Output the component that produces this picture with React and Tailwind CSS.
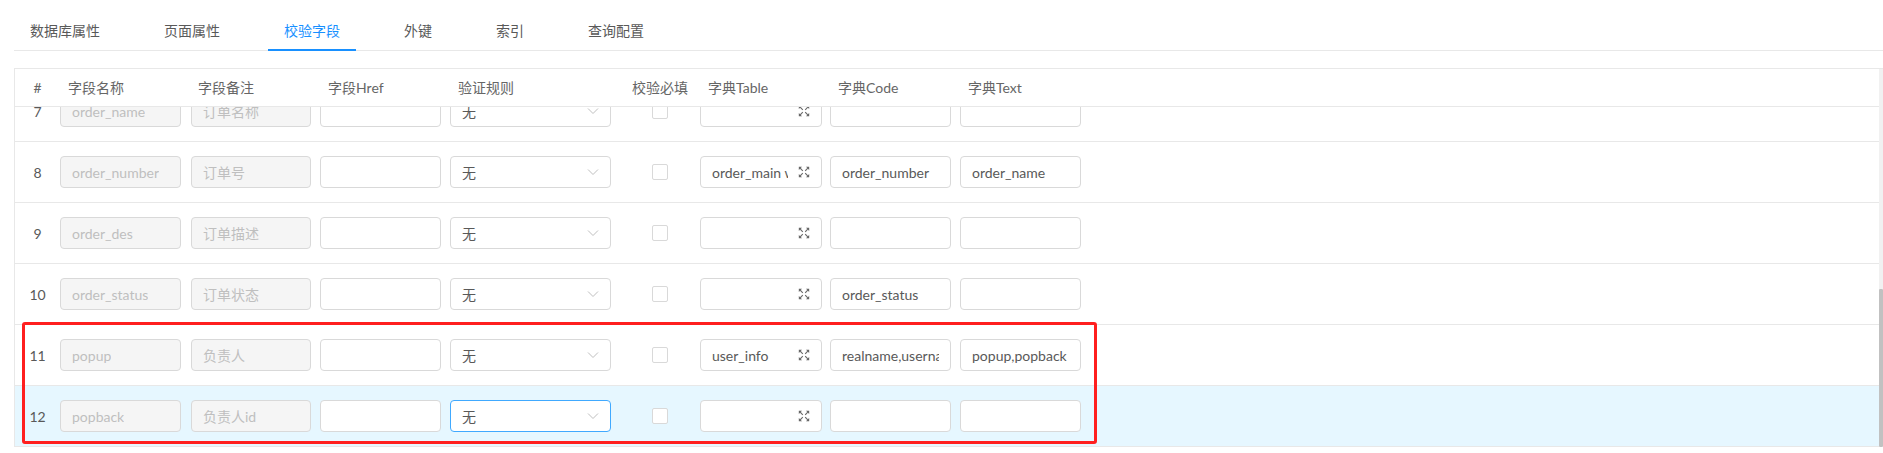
import React from "react";

const FONT = { fontFamily: 'Lato, "Noto Sans CJK SC", sans-serif' };

const tabs = ["数据库属性", "页面属性", "校验字段", "外键", "索引", "查询配置"];

const rows = [
  { n: 7, name: "order_name", remark: "订单名称", table: "", code: "", text: "" },
  { n: 8, name: "order_number", remark: "订单号", table: "order_main with_detail", code: "order_number", text: "order_name" },
  { n: 9, name: "order_des", remark: "订单描述", table: "", code: "", text: "" },
  { n: 10, name: "order_status", remark: "订单状态", table: "", code: "order_status", text: "" },
  { n: 11, name: "popup", remark: "负责人", table: "user_info", code: "realname,username", text: "popup,popback" },
  { n: 12, name: "popback", remark: "负责人id", table: "", code: "", text: "", active: true },
];

function Chevron() {
  return (
    <svg width="12" height="12" viewBox="0 0 12 12" fill="none" className="shrink-0">
      <path d="M1 3.5 L6 8.5 L11 3.5" stroke="#bfbfbf" strokeWidth="1" />
    </svg>
  );
}

function ExpandIcon() {
  return (
    <svg width="12" height="12" viewBox="0 0 12 12" fill="none" className="shrink-0 ml-[10px]">
      <g stroke="#666" strokeWidth="1.1">
        <path d="M2.2 2.2 L4.8 4.8" />
        <path d="M9.8 2.2 L7.2 4.8" />
        <path d="M2.2 9.8 L4.8 7.2" />
        <path d="M9.8 9.8 L7.2 7.2" />
      </g>
      <g fill="#666">
        <path d="M0.8 0.8 L4 0.8 L0.8 4 Z" />
        <path d="M11.2 0.8 L8 0.8 L11.2 4 Z" />
        <path d="M0.8 11.2 L4 11.2 L0.8 8 Z" />
        <path d="M11.2 11.2 L8 11.2 L11.2 8 Z" />
      </g>
    </svg>
  );
}

function DisabledInput({ value, w }) {
  return (
    <div className={`${w} h-[32px] rounded-[4px] border border-[#d9d9d9] bg-[#f5f5f5] px-[11px] flex items-center text-[14px] text-[#bfbfbf]`}>
      <span className="overflow-hidden whitespace-nowrap">{value}</span>
    </div>
  );
}

function TextInput({ value, w }) {
  return (
    <div className={`${w} h-[32px] rounded-[4px] border border-[#d9d9d9] bg-white px-[11px] flex items-center text-[14px] text-[#595959]`}>
      <span className="overflow-hidden whitespace-nowrap flex-1">{value}</span>
    </div>
  );
}

function SelectBox({ active }) {
  return (
    <div
      className={`w-[161px] h-[32px] rounded-[4px] border bg-white pl-[11px] pr-[11px] flex items-center justify-between text-[14px] text-[#595959] ${
        active ? "border-[#40a9ff]" : "border-[#d9d9d9]"
      }`}
    >
      <span>无</span>
      <Chevron />
    </div>
  );
}

function PopupInput({ value }) {
  return (
    <div className="w-[122px] h-[32px] rounded-[4px] border border-[#d9d9d9] bg-white px-[11px] flex items-center text-[14px] text-[#595959]">
      <span className="overflow-hidden whitespace-nowrap flex-1">{value}</span>
      <ExpandIcon />
    </div>
  );
}

function Checkbox() {
  return <div className="w-[16px] h-[16px] rounded-[2px] border border-[#d9d9d9] bg-white" />;
}

export default function App() {
  return (
    <div className="relative w-[1883px] h-[453px] bg-white overflow-hidden" style={FONT}>
      {/* Tabs */}
      <div className="ml-[14px] h-[51px] border-b border-[#e8e8e8] flex items-end">
        {tabs.map((t) => {
          const active = t === "校验字段";
          return (
            <div
              key={t}
              className={`relative px-4 mr-8 pb-[9px] text-[14px] leading-[21px] ${
                active ? "text-[#1890ff]" : "text-[#595959]"
              }`}
            >
              {t}
              {active && <div className="absolute left-0 right-0 -bottom-px h-[2px] bg-[#1890ff]" />}
            </div>
          );
        })}
      </div>

      {/* Table */}
      <div className="mt-[17px] ml-[14px] border-t border-l border-[#e8e8e8] flex">
        <div className="flex-1 flex flex-col">
          {/* Header */}
          <div className="h-[38px] border-b border-[#e8e8e8] flex items-center text-[14px] text-[#666]">
            <div className="w-[45px] text-center">#</div>
            <div className="w-[131px] pl-2">字段名称</div>
            <div className="w-[129px] pl-[7px]">字段备注</div>
            <div className="w-[130px] pl-2">字段Href</div>
            <div className="w-[170px] pl-2">验证规则</div>
            <div className="w-[80px] text-center">校验必填</div>
            <div className="w-[130px] pl-2">字典Table</div>
            <div className="w-[130px] pl-2">字典Code</div>
            <div className="flex-1 pl-2">字典Text</div>
          </div>
          {/* Body */}
          <div className="h-[340px] overflow-hidden">
            <div className="-mt-[26px]">
              {rows.map((r) => (
                <div
                  key={r.n}
                  className={`h-[61px] border-b border-[#e8e8e8] flex items-center ${
                    r.active ? "bg-[#e6f7ff]" : "bg-white"
                  }`}
                >
                  <div className="w-[45px] text-center text-[14px] text-[#595959]">{r.n}</div>
                  <div className="w-[131px]">
                    <DisabledInput value={r.name} w="w-[121px]" />
                  </div>
                  <div className="w-[129px]">
                    <DisabledInput value={r.remark} w="w-[120px]" />
                  </div>
                  <div className="w-[130px]">
                    <TextInput value="" w="w-[121px]" />
                  </div>
                  <div className="w-[170px]">
                    <SelectBox active={r.active} />
                  </div>
                  <div className="w-[80px] flex justify-center">
                    <Checkbox />
                  </div>
                  <div className="w-[130px]">
                    <PopupInput value={r.table} />
                  </div>
                  <div className="w-[130px]">
                    <TextInput value={r.code} w="w-[121px]" />
                  </div>
                  <div className="flex-1">
                    <TextInput value={r.text} w="w-[121px]" />
                  </div>
                </div>
              ))}
            </div>
          </div>
        </div>
        {/* Scrollbar */}
        <div className="w-[4px] flex flex-col">
          <div className="flex-1 bg-[#f1f1f1]" />
          <div className="h-[158px] bg-[#c1c1c1] rounded-[1px]" />
        </div>
      </div>

      {/* Red annotation box */}
      <div className="absolute left-[22px] top-[322px] w-[1075px] h-[122px] border-[3px] border-[#ff1f1f] rounded-[3px] pointer-events-none" />
    </div>
  );
}
